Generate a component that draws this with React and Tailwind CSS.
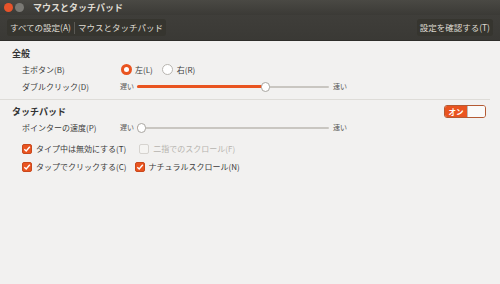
import React from "react";

const font = { fontFamily: '"Noto Sans CJK JP", "Noto Sans", sans-serif' };

function Radio({ checked }) {
  return checked ? (
    <span className="shrink-0 w-[11px] h-[11px] rounded-full bg-[#e95420] flex items-center justify-center">
      <span className="w-[5px] h-[5px] rounded-full bg-white" />
    </span>
  ) : (
    <span className="shrink-0 block w-[11px] h-[11px] rounded-full bg-white border border-[#b8b5b0]" />
  );
}

function Check({ checked, disabled }) {
  if (disabled)
    return <span className="shrink-0 block w-[10px] h-[10px] rounded-[2px] border border-[#d6d3cf] bg-[#f5f4f2]" />;
  return (
    <span className="shrink-0 w-[10px] h-[10px] rounded-[2px] bg-[#e95420] border border-[#c9491d] flex items-center justify-center">
      {checked && (
        <svg width="8" height="8" viewBox="0 0 8 8">
          <path d="M1.3 4.2 L3.2 6 L6.8 1.8" stroke="white" strokeWidth="1.4" fill="none" />
        </svg>
      )}
    </span>
  );
}

function Slider({ value }) {
  return (
    <div className="flex items-center gap-[3px] text-[7px] text-[#555]">
      <span className="w-[14px]">遅い</span>
      <div className="relative w-[192px] h-[11px] flex items-center">
        <div className="w-full h-[2px] bg-[#c9c6c1] rounded" />
        <div className="absolute left-0 h-[3px] bg-[#e95420] rounded" style={{ width: value }} />
        <div
          className="absolute w-[9px] h-[10px] rounded-full bg-white border border-[#a9a6a1]"
          style={{ left: value - 4 }}
        />
      </div>
      <span className="ml-[1px]">速い</span>
    </div>
  );
}

export default function App() {
  return (
    <div className="w-[500px] h-[284px] bg-[#f2f1f0] flex flex-col text-[#3c3c3c]" style={font}>
      <div className="h-[15px] bg-gradient-to-b from-[#4a4944] to-[#3b3a36] flex items-center px-[4px]">
        <span className="w-[9px] h-[9px] rounded-full bg-[#e8532a]" />
        <span className="w-[9px] h-[9px] rounded-full bg-[#7a7974] ml-[2px]" />
        <span className="ml-[9px] text-[9px] font-bold text-[#dfdbd2]">マウスとタッチパッド</span>
      </div>
      <div className="h-[26px] bg-gradient-to-b from-[#3f3e3a] to-[#3a3935] flex items-center px-[7px] border-b border-[#2e2d2a]">
        <div className="flex items-center bg-[#36352f] rounded-[3px] h-[17px] px-[3px] text-[8.5px] text-[#dfdbd2]">
          <span>すべての設定(A)</span>
          <span className="w-px h-[12px] bg-[#5a5954] mx-[3px]" />
          <span>マウスとタッチパッド</span>
        </div>
        <div className="ml-auto flex items-center bg-[#36352f] rounded-[3px] h-[17px] px-[3px] text-[8.5px] text-[#dfdbd2]">
          設定を確認する(T)
        </div>
      </div>

      <div className="flex flex-col pl-[12px] pr-[14px] pt-[6px]">
        <div className="text-[9px] font-bold text-[#333] h-[14px] leading-[14px]">全般</div>
        <div className="flex items-center h-[17px] text-[8px]">
          <span className="ml-[10px] w-[99px]">主ボタン(B)</span>
          <Radio checked />
          <span className="ml-[3px]">左(L)</span>
          <span className="ml-[9px]"><Radio /></span>
          <span className="ml-[4px]">右(R)</span>
        </div>
        <div className="flex items-center h-[17px] text-[8px]">
          <span className="ml-[10px] w-[98px]">ダブルクリック(D)</span>
          <Slider value={128} />
        </div>
      </div>
      <div className="h-px bg-[#dedcd8] mt-[4px] mr-[10px]" />

      <div className="flex flex-col pl-[12px] pr-[14px] pt-[4px]">
        <div className="flex items-center h-[15px]">
          <span className="text-[9px] font-bold text-[#333]">タッチパッド</span>
          <div className="ml-auto flex h-[13px] w-[42px] rounded-[3px] border border-[#b45a33] overflow-hidden">
            <span className="w-[22px] bg-[#e95420] text-white text-[7.5px] font-bold flex items-center justify-center">オン</span>
            <span className="flex-1 bg-[#fafaf9] border-l border-[#bbb]" />
          </div>
        </div>
        <div className="flex items-center h-[17px] text-[8px]">
          <span className="ml-[10px] w-[98px]">ポインターの速度(P)</span>
          <Slider value={4} />
        </div>
        <div className="flex items-center h-[19px] text-[8px] mt-[3px]">
          <span className="ml-[10px]"><Check checked /></span>
          <span className="ml-[4px]">タイプ中は無効にする(T)</span>
          <span className="ml-[13px]"><Check disabled /></span>
          <span className="ml-[4px] text-[#b7b4af]">二指でのスクロール(F)</span>
        </div>
        <div className="flex items-center h-[17px] text-[8px]">
          <span className="ml-[10px]"><Check checked /></span>
          <span className="ml-[4px]">タップでクリックする(C)</span>
          <span className="ml-[8px]"><Check checked /></span>
          <span className="ml-[4px]">ナチュラルスクロール(N)</span>
        </div>
      </div>
    </div>
  );
}
